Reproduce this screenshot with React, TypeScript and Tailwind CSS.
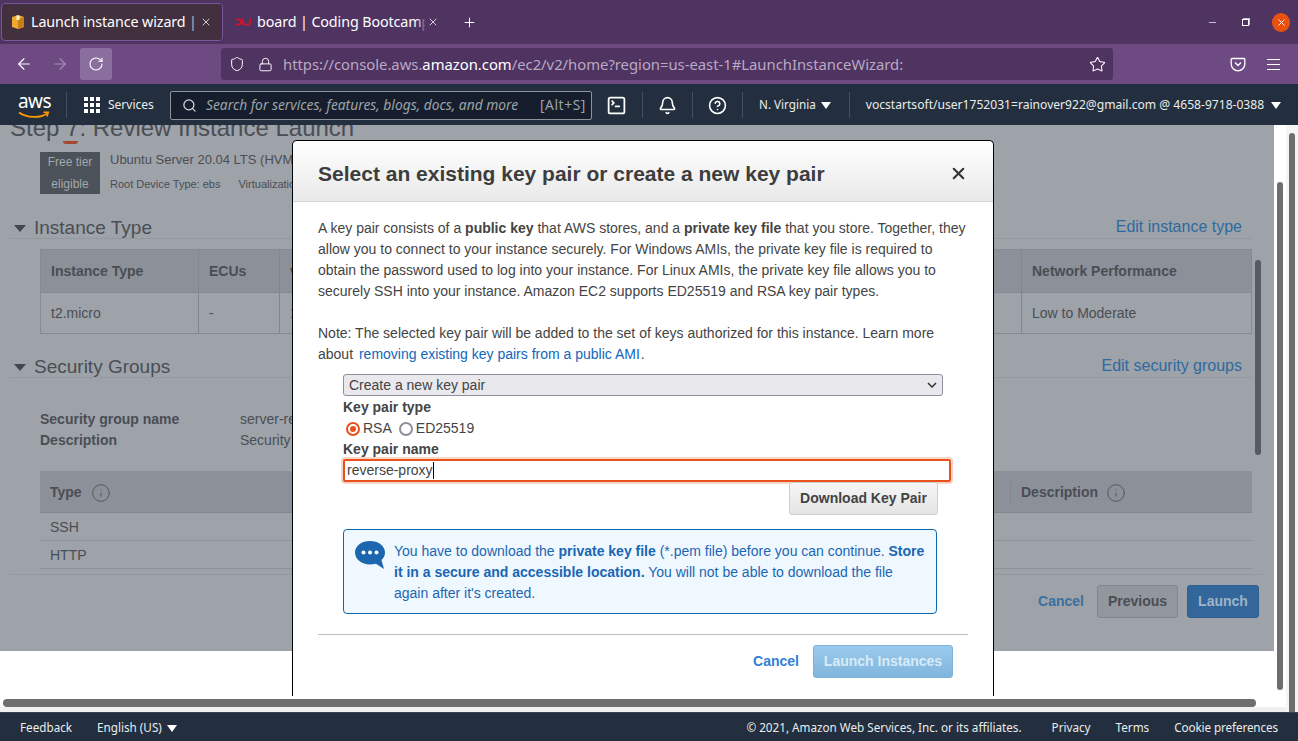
import { ArrowLeft, ArrowRight, Bell, CircleHelp, Info, Lock, Minus, Plus, RotateCw, Search, Shield, SquareTerminal, Star, X } from "lucide-react";

const chromeFont = "font-['Noto_Sans',sans-serif]";
const pageFont = "font-['Liberation_Sans',Arial,sans-serif]";

function Caret({ className }: { className: string }) {
  return <span className={`h-0 w-0 border-x-[5px] border-t-[7px] border-x-transparent ${className}`} />;
}

function NavDivider() {
  return <span className="block h-[26px] w-px bg-[#46505c]" />;
}

function BrowserTabs() {
  return (
    <div className={`flex h-[44px] items-center bg-[#4f3361] text-white ${chromeFont}`}>
      <div className="relative ml-px flex h-[38px] w-[222px] items-center overflow-hidden rounded-[4px] border border-[#7b559a] bg-[#42303f] pl-[8px]">
        <svg width="16" height="16" viewBox="0 0 16 16" className="shrink-0">
          <path d="M2 3l6-2 6 2v10l-6 2-6-2z" fill="#f0a92e" />
          <path d="M8 5v10l6-2V3z" fill="#c97f17" />
          <path d="M6.5 1.6h3V6h-3z" fill="#fff1cf" />
        </svg>
        <span className="ml-[5px] whitespace-nowrap pt-px text-[14.3px] leading-none tracking-[-0.1px]">Launch instance wizard | EC2</span>
        <span className="absolute inset-y-0 right-0 flex w-[34px] items-center justify-end bg-linear-to-r from-transparent via-[#42303f] via-40% to-[#42303f] pr-[10px]">
          <X size={12} strokeWidth={1.5} />
        </span>
      </div>
      <div className="relative flex h-[38px] w-[224px] items-center overflow-hidden pl-[12px]">
        <svg width="16" height="10" viewBox="0 0 18 10" className="shrink-0" fill="none" stroke="#d3132a" strokeWidth="2">
          <path d="M1 2h3a3 3 0 0 1 0 6H1" />
          <path d="M9 1v4a3 3 0 0 0 3 3h2a3 3 0 0 0 3-3V1" />
        </svg>
        <span className="ml-[6px] whitespace-nowrap pt-px text-[14.3px] leading-none tracking-[-0.1px]">board | Coding Bootcamp</span>
        <span className="absolute inset-y-0 right-0 flex w-[30px] items-center justify-end bg-linear-to-r from-transparent via-[#4f3361] via-30% to-[#4f3361] pr-[8px]">
          <X size={12} strokeWidth={1.5} />
        </span>
      </div>
      <Plus size={15} strokeWidth={1.6} className="ml-[15px]" />
      <div className="ml-auto flex items-center">
        <Minus size={11} strokeWidth={1.5} />
        <span className="relative ml-[24px] h-[7px] w-[7px] border border-white">
          <span className="absolute -right-[2px] -top-[2px] h-[7px] w-[7px] border-r border-t border-white/70" />
        </span>
        <span className="ml-[23px] mr-[8px] flex h-[19px] w-[18px] items-center justify-center rounded-full bg-[#e9510e]">
          <X size={11} strokeWidth={2} />
        </span>
      </div>
    </div>
  );
}

function BrowserToolbar() {
  return (
    <div className={`flex h-[40px] items-center bg-[#6d4a82] text-white ${chromeFont}`}>
      <ArrowLeft size={18} strokeWidth={1.5} className="ml-[15px]" />
      <ArrowRight size={18} strokeWidth={1.5} className="ml-[18px] text-[#a48db4]" />
      <span className="ml-[11px] flex h-[32px] w-[32px] items-center justify-center rounded-[3px] bg-[#8a6e9d]">
        <RotateCw size={16} strokeWidth={1.6} />
      </span>
      <div className="ml-[109px] flex h-[32px] w-[892px] items-center rounded-[3px] bg-[#4f3361] text-[14.8px]">
        <Shield size={16} strokeWidth={1.5} className="ml-[8px]" />
        <Lock size={15} strokeWidth={1.5} className="ml-[13px]" />
        <span className="ml-[10px] whitespace-nowrap text-[#b9a9c4]">
          https://console.aws.<span className="text-white">amazon.com</span>/ec2/v2/home?region=us-east-1#LaunchInstanceWizard:
        </span>
        <Star size={17} strokeWidth={1.5} className="ml-auto mr-[7px]" />
      </div>
      <svg width="16" height="16" viewBox="0 0 16 16" fill="none" stroke="white" strokeWidth="1.3" className="ml-[117px]">
        <path d="M2 2.5h12a.8.8 0 0 1 .8.8V8a6.8 6.8 0 0 1-13.6 0V3.300a.8.8 0 0 1 .8-.8z" />
        <path d="M5 6.500l3 3 3-3" />
      </svg>
      <span className="ml-[21px] flex h-[11px] w-[13px] flex-col justify-between">
        <span className="h-px bg-white" />
        <span className="h-px bg-white" />
        <span className="h-px bg-white" />
      </span>
    </div>
  );
}

function AwsNav() {
  return (
    <div className={`flex h-[41px] items-center bg-[#232f3e] pt-px text-[#eaeded] ${chromeFont}`}>
      <div className="relative ml-[18px] h-[28px] w-[31px] text-[19px] leading-[20px] tracking-[-0.6px] text-white">
        aws
        <svg width="32" height="9" viewBox="0 0 32 9" className="absolute left-0 top-[20px]" fill="none">
          <path d="M1 1.500c8 5.500 21 6 28 1" stroke="#f90" strokeWidth="1.800" />
          <path d="M25.500 1.200h4.800l-1.300 4.300" stroke="#f90" strokeWidth="1.500" />
        </svg>
      </div>
      <span className="ml-[17px]"><NavDivider /></span>
      <div className="ml-[17px] grid grid-cols-3 gap-[2px]">
        {Array.from({ length: 9 }).map((_, i) => (
          <span key={i} className="h-[4px] w-[4px] bg-white" />
        ))}
      </div>
      <span className="ml-[8px] w-[50px] text-[12px]">Services</span>
      <div className="ml-[12px] flex h-[29px] w-[422px] items-center rounded-[2px] border border-[#8d9499] bg-[#161e2d] pl-[11px] pr-[5px] text-[13.8px]">
        <Search size={15} strokeWidth={2} className="text-[#d5dbdb]" />
        <span className="ml-[9px] whitespace-nowrap italic text-[#9ba3a8]">Search for services, features, blogs, docs, and more</span>
        <span className="ml-auto tracking-[0.6px] text-[#9ba3a8]">[Alt+S]</span>
      </div>
      <SquareTerminal size={21} strokeWidth={2} className="ml-[14px] text-white" />
      <span className="ml-[15px]"><NavDivider /></span>
      <Bell size={19} strokeWidth={2} className="ml-[15px] text-white" />
      <span className="ml-[15px]"><NavDivider /></span>
      <CircleHelp size={19} strokeWidth={2} className="ml-[15px] text-white" />
      <span className="ml-[15px]"><NavDivider /></span>
      <span className="ml-[16px] text-[11.700px]">N. Virginia</span>
      <Caret className="ml-[5px] border-t-white" />
      <span className="ml-[18px]"><NavDivider /></span>
      <span className="ml-[16px] whitespace-nowrap text-[12.100px]">vocstartsoft/user1752031=rainover922@gmail.com @ 4658-9718-0388</span>
      <Caret className="ml-[7px] border-t-white" />
    </div>
  );
}

function SectionHeading({ title, action }: { title: string; action: string }) {
  return (
    <div className="ml-[10px] flex h-[21px] w-[1242px] items-center border-b border-[#94989f]">
      <Caret className="ml-[4px] border-x-[6px] border-t-[#43474d]" />
      <span className="ml-[8px] text-[19px] text-[#4a4e54]">{title}</span>
      <span className="-mt-[2px] ml-auto mr-[10px] text-[16px] text-[#2f6a9f]">{action}</span>
    </div>
  );
}

function BackgroundPage() {
  return (
    <div className="h-[526px] overflow-hidden bg-[#9ea2a9] text-[#4a4e54]">
      <div className="-mt-[11px] ml-[10px] text-[24px] leading-[28px] text-[#4a4e54]">Step 7: Review Instance Launch</div>
      <div className="relative ml-[40px] mt-[9px] flex h-[48px]">
        <span className="absolute -top-[10px] left-[23px] h-[3px] w-[15px] rounded-b-full bg-[#a5482e]" />
        <div className="mt-px flex h-[42px] w-[60px] flex-col items-center justify-center bg-[#4c5259] text-[12px] leading-[22px] text-[#a3a7ad]">
          <span>Free tier</span>
          <span>eligible</span>
        </div>
        <div className="ml-[10px]">
          <div className="text-[13px] leading-[18px]">Ubuntu Server 20.04 LTS (HVM), SSD Volume Type</div>
          <div className="mt-[7px] flex text-[11px] leading-[16px]">
            <span>Root Device Type: ebs</span>
            <span className="ml-[18px]">Virtualization type: hvm</span>
          </div>
        </div>
      </div>
      <div className="mt-[19px]">
        <SectionHeading title="Instance Type" action="Edit instance type" />
      </div>
      <div className="ml-[40px] mt-[10px] w-[1212px] border border-[#868a91] text-[14px]">
        <div className="flex h-[43px] border-b border-[#868a91] bg-[#8c9098] font-bold">
          <span className="flex w-[158px] items-center border-r border-[#82868d] pl-[10px]">Instance Type</span>
          <span className="flex w-[81px] items-center border-r border-[#82868d] pl-[10px]">ECUs</span>
          <span className="flex w-[742px] items-center border-r border-[#82868d] pl-[10px]">vCPUs</span>
          <span className="flex flex-1 items-center pl-[10px]">Network Performance</span>
        </div>
        <div className="flex h-[40px]">
          <span className="flex w-[158px] items-center border-r border-[#82868d] pl-[10px]">t2.micro</span>
          <span className="flex w-[81px] items-center border-r border-[#82868d] pl-[10px]">-</span>
          <span className="flex w-[742px] items-center border-r border-[#82868d] pl-[10px]">1</span>
          <span className="flex flex-1 items-center pl-[10px]">Low to Moderate</span>
        </div>
      </div>
      <div className="mt-[23px]">
        <SectionHeading title="Security Groups" action="Edit security groups" />
      </div>
      <div className="ml-[40px] mt-[31px] grid w-[400px] grid-cols-[200px_200px] text-[14px] leading-[21px]">
        <span className="font-bold">Security group name</span>
        <span>server-re</span>
        <span className="font-bold">Description</span>
        <span>Security</span>
      </div>
      <div className="ml-[40px] mt-[20px] w-[1212px] text-[14px]">
        <div className="flex h-[42px] items-center border-b border-[#83878e] bg-[#8c9098] pt-[2px] font-bold">
          <span className="ml-[10px]">Type</span>
          <Info size={20} strokeWidth={1} className="ml-[9px]" />
          <span className="ml-auto flex h-[20px] w-[242px] items-center border-l border-[#82868d] pl-[10px]">
            <span>Description</span>
            <Info size={20} strokeWidth={1} className="ml-[8px]" />
          </span>
        </div>
        <div className="flex h-[28px] items-center border-b border-[#8e9299] pl-[10px] pt-[2px]">SSH</div>
        <div className="flex h-[28px] items-center border-b border-[#8e9299] pl-[10px] pt-[2px]">HTTP</div>
      </div>
      <div className="ml-[10px] mt-[5px] flex w-[1253px] items-center justify-end border-t border-[#94989f] pr-[4px] pt-[10px] text-[14px] font-bold">
        <span className="text-[#3a6f9f]">Cancel</span>
        <span className="ml-[13px] flex h-[33px] w-[81px] items-center justify-center rounded-[3px] border border-[#82868d] bg-[#92969d]">Previous</span>
        <span className="ml-[9px] flex h-[33px] w-[72px] items-center justify-center rounded-[3px] border border-[#2e5f90] bg-[#33669a] text-[#9fb4c9]">Launch</span>
      </div>
    </div>
  );
}

function KeyPairModal() {
  return (
    <div className="absolute left-[292px] top-[15px] h-[556px] w-[702px] rounded-t-[5px] border-x border-t border-black bg-white text-[14px] leading-[21px] text-[#444]">
      <div className="flex h-[61px] items-center justify-between rounded-t-[5px] border-b border-[#d5d5d5] bg-linear-to-b from-white to-[#e9e9e9] pl-[25px] pr-[25px] pt-[4px]">
        <h2 className="text-[21px] font-bold text-[#3d3d3d]">Select an existing key pair or create a new key pair</h2>
        <X size={19} strokeWidth={2.6} className="text-[#333]" />
      </div>
      <div className="pl-[25px] pr-[25px] pt-[16px]">
        <p>
          A key pair consists of a <b>public key</b> that AWS stores, and a <b>private key file</b> that you store. Together, they allow you to connect to your instance securely. For Windows AMIs, the private key file is required to obtain the password used to log into your instance. For Linux AMIs, the private key file allows you to securely SSH into your instance. Amazon EC2 supports ED25519 and RSA key pair types.
        </p>
        <p className="mt-[21px]">
          Note: The selected key pair will be added to the set of keys authorized for this instance. Learn more about <span className="ml-[2px] text-[#1166bb]">removing existing key pairs from a public AMI</span><span className="ml-px">.</span>
        </p>
        <div className="ml-[25px] mt-[9px] w-[608px]">
          <div className="mb-px flex h-[22px] w-[600px] items-center justify-between rounded-[3px] border border-[#8f8f9d] bg-[#e9e9ed] pl-[5px] pr-[5px] leading-none">
            <span>Create a new key pair</span>
            <svg width="10" height="6" viewBox="0 0 10 6" fill="none" stroke="#333" strokeWidth="1.500"><path d="M1 1l4 4 4-4" /></svg>
          </div>
          <div className="font-bold">Key pair type</div>
          <div className="flex items-center">
            <span className="ml-[3px] flex h-[14px] w-[14px] items-center justify-center rounded-full border-2 border-[#e9511c]">
              <span className="h-[6px] w-[6px] rounded-full bg-[#e9511c]" />
            </span>
            <span className="ml-[3px]">RSA</span>
            <span className="ml-[7px] h-[14px] w-[14px] rounded-full border-2 border-[#8f8f9d]" />
            <span className="ml-[3px]">ED25519</span>
          </div>
          <div className="font-bold">Key pair name</div>
          <div className="-mt-px flex h-[23px] items-center rounded-[2px] border-2 border-[#e9511c] pl-[2px] ring-2 ring-[#f9d5c8]">
            reverse-proxy<span className="h-[17px] w-px bg-black" />
          </div>
          <div className="flex justify-end pr-[13px]">
            <span className="flex h-[33px] w-[149px] items-center justify-center rounded-[3px] border border-[#cfcfcf] bg-linear-to-b from-[#f6f6f6] to-[#e4e4e4] font-bold">Download Key Pair</span>
          </div>
          <div className="mt-[14px] flex h-[85px] w-[594px] rounded-[4px] border border-[#0f68ae] bg-[#f0f8ff] pl-[11px] pr-[10px] pt-[11px] text-[#1a66b3]">
            <svg width="30" height="29" viewBox="0 0 30 29" className="shrink-0">
              <path d="M15 0c8.300 0 15 4.800 15 11.500 0 3-1.300 5.500-3.500 7.500l2.500 9-8-5.300c-2 .5-4 .8-6 .8C6.700 23.500 0 18.200 0 11.500S6.700 0 15 0z" fill="#1b66ae" />
              <circle cx="8.500" cy="11.500" r="2" fill="#fff" />
              <circle cx="15" cy="11.500" r="2" fill="#fff" />
              <circle cx="21.500" cy="11.500" r="2" fill="#fff" />
            </svg>
            <p className="ml-[9px]">
              You have to download the <b>private key file</b> (*.pem file) before you can continue. <b>Store it in a secure and accessible location.</b> You will not be able to download the file again after it's created.
            </p>
          </div>
        </div>
        <div className="mt-[20px] flex items-center justify-end border-t border-[#bdbdbd] pr-[15px] pt-[10px] font-bold">
          <span className="text-[#2f80d8]">Cancel</span>
          <span className="ml-[14px] flex h-[33px] w-[140px] items-center justify-center rounded-[3px] border border-[#7fb2d8] bg-linear-to-b from-[#9acbed] to-[#80b5dd] text-[#d9ebf6]">Launch Instances</span>
        </div>
      </div>
    </div>
  );
}

function PageScrollbars() {
  return (
    <>
      <span className="absolute left-[1255px] top-[135px] h-[195px] w-[6px] rounded-full bg-[#565b61]" />
      <span className="absolute left-[1277px] top-[57px] h-[508px] w-[6px] rounded-full bg-[#6e6e6e]" />
      <span className="absolute bottom-0 left-[1286px] top-0 w-[12px] bg-[#f5f5f5]" />
      <span className="absolute left-[1289px] top-[8px] h-[593px] w-[6px] rounded-full bg-[#6e6e6e]" />
    </>
  );
}

function FooterBar() {
  return (
    <div className={`flex h-[29px] items-center border-t border-[#3a4451] bg-[#232f3e] pl-[20px] pr-[20px] pt-[2px] text-[11.700px] text-[#eaeded] ${chromeFont}`}>
      <span>Feedback</span>
      <span className="ml-[25px]">English (US)</span>
      <Caret className="ml-[5px] border-t-white" />
      <span className="ml-auto">© 2021, Amazon Web Services, Inc. or its affiliates.</span>
      <span className="ml-[30px]">Privacy</span>
      <span className="ml-[25px]">Terms</span>
      <span className="ml-[25px] tracking-[-0.1px]">Cookie preferences</span>
    </div>
  );
}

export default function App() {
  return (
    <div className={`flex h-[741px] w-[1298px] flex-col overflow-hidden bg-white ${pageFont}`}>
      <BrowserTabs />
      <BrowserToolbar />
      <AwsNav />
      <div className="relative h-[587px] overflow-hidden">
        <div className="w-[1274px]">
          <BackgroundPage />
        </div>
        <KeyPairModal />
        <div className="ml-[3px] mt-[48px] h-[8px] w-[1253px] rounded-full bg-[#6e6e6e]" />
        <div className="h-[5px] bg-[#f0f0f0]" />
        <PageScrollbars />
      </div>
      <FooterBar />
    </div>
  );
}
